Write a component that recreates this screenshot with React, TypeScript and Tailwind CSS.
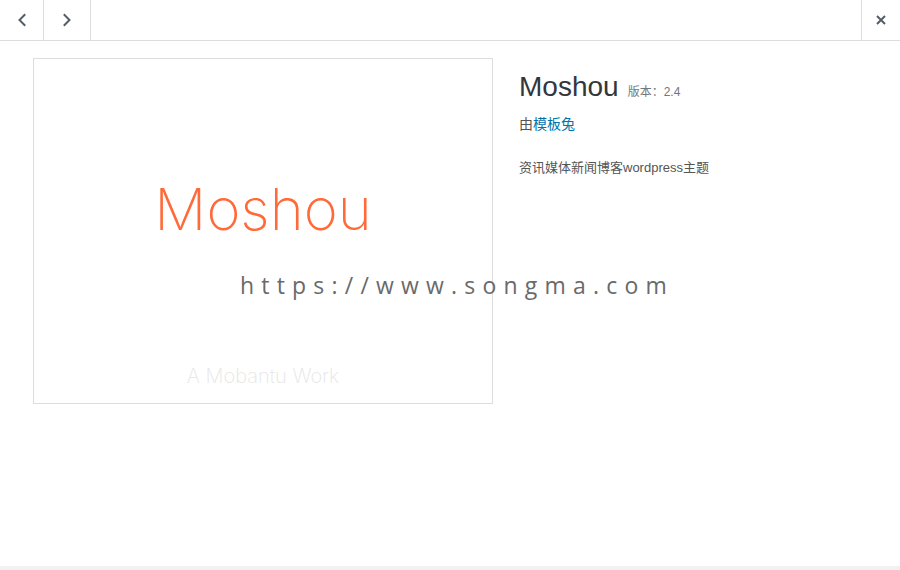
import React from "react";

const sans = { fontFamily: '"Liberation Sans", "Noto Sans CJK SC", sans-serif' };

function Chevron({ dir }: { dir: "left" | "right" }) {
  return (
    <svg width="10" height="14" viewBox="0 0 10 14" fill="none">
      <path
        d={dir === "left" ? "M7.5 2 L2.5 7 L7.5 12" : "M2.5 2 L7.5 7 L2.5 12"}
        stroke="#555d66"
        strokeWidth="2"
        strokeLinecap="square"
      />
    </svg>
  );
}

function Header() {
  return (
    <header className="flex h-[41px] border-b border-[#ddd] bg-white">
      <button className="flex w-[44px] items-center justify-center border-r border-[#ddd]">
        <Chevron dir="left" />
      </button>
      <button className="flex w-[47px] items-center justify-center border-r border-[#ddd]">
        <Chevron dir="right" />
      </button>
      <div className="flex-1" />
      <button className="flex w-[39px] items-center justify-center border-l border-[#ddd]">
        <svg width="12" height="12" viewBox="0 0 12 12" fill="none">
          <path d="M2 2 L10 10 M10 2 L2 10" stroke="#555d66" strokeWidth="2" />
        </svg>
      </button>
    </header>
  );
}

function ThemeScreenshot() {
  return (
    <div
      className="flex h-[346px] w-[460px] shrink-0 flex-col items-center border border-[#ddd] bg-white"
      style={{ fontFamily: 'Inter, "Liberation Sans", sans-serif' }}
    >
      <div className="mt-[121px] text-[58px] font-extralight leading-none text-[#ff6a38]">Moshou</div>
      <div className="mt-auto mb-[12px] text-[20px] font-extralight text-[#e6e6e6]">A Mobantu Work</div>
    </div>
  );
}

function ThemeInfo() {
  return (
    <div className="pt-[12px]" style={sans}>
      <h2 className="flex items-baseline gap-[9px] text-[28px] leading-[34px] text-[#32373c]">
        Moshou
        <span className="text-[12px] text-[#72777c]">版本：2.4</span>
      </h2>
      <p className="mt-[5px] text-[14px] text-[#555]">
        由<a className="text-[#0073aa]">模板兔</a>
      </p>
      <p className="mt-[23px] text-[13px] text-[#555]">资讯媒体新闻博客wordpress主题</p>
    </div>
  );
}

export default function App() {
  return (
    <div className="relative flex h-[570px] w-[900px] flex-col bg-white">
      <Header />
      <main className="flex flex-1 gap-[26px] pl-[33px] pt-[17px]">
        <ThemeScreenshot />
        <ThemeInfo />
      </main>
      <div className="h-[4px] bg-[#f1f1f1]" />
      <div
        className="pointer-events-none absolute left-[240px] top-[268px] text-[23px] tracking-[7.2px] text-[#6a6a6a]"
        style={{ fontFamily: '"Open Sans", "Noto Sans", sans-serif' }}
      >
        https://www.songma.com
      </div>
    </div>
  );
}
